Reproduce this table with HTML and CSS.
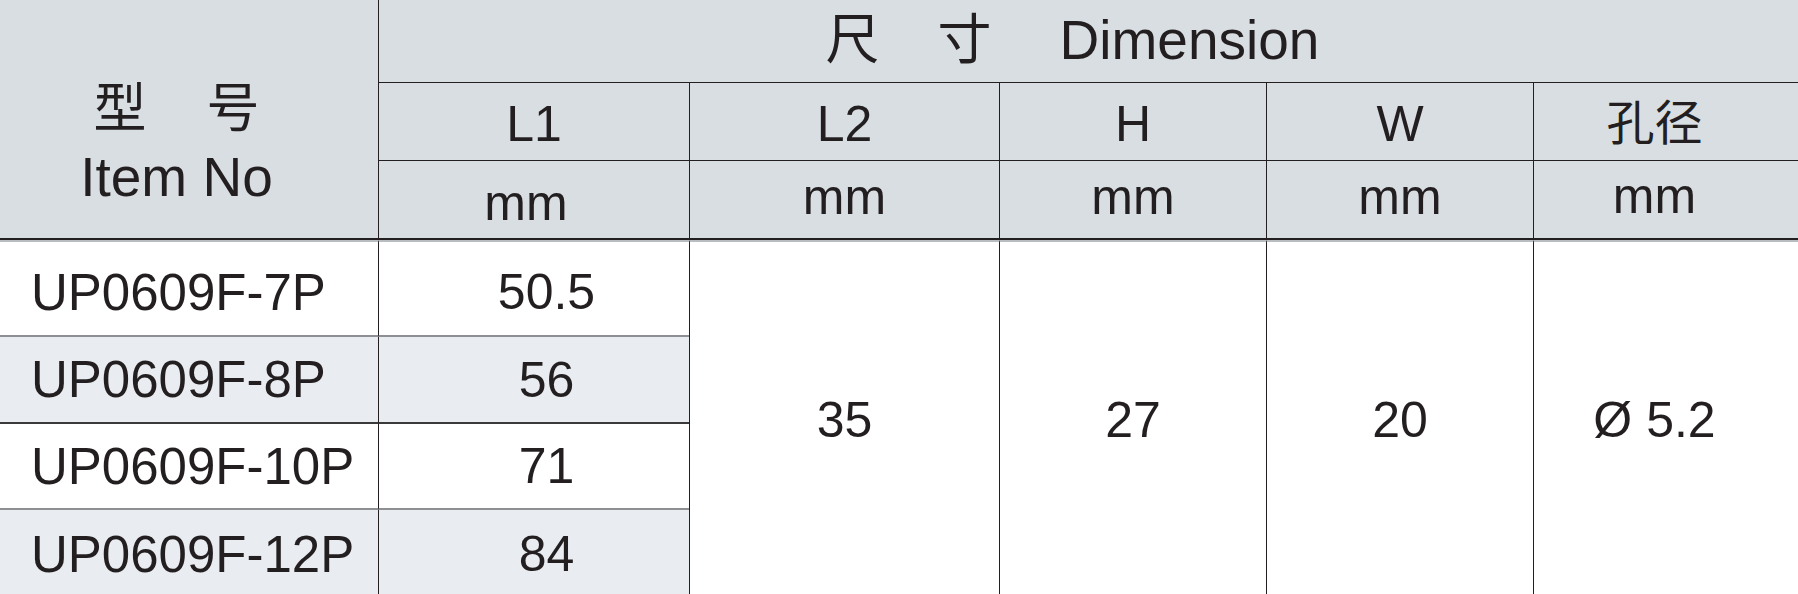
FILE: index.html
```html
<!DOCTYPE html>
<html lang="zh">
<head>
<meta charset="utf-8">
<title>UP0609F Dimension</title>
<link rel="stylesheet" href="styles.css">
</head>
<body>
<div class="spec">
  <div class="cell head item-head">
    <div class="cn-pair"><span>型</span><span>号</span></div>
    <div class="en-title">Item No</div>
  </div>
  <div class="cell head dim-head">
    <span class="cn-char">尺</span><span class="cn-char second">寸</span><span class="en-title dim-word">Dimension</span>
  </div>

  <div class="cell head sub">L1</div>
  <div class="cell head sub">L2</div>
  <div class="cell head sub">H</div>
  <div class="cell head sub">W</div>
  <div class="cell head sub hole">孔径</div>

  <div class="cell head unit unit-l1">mm</div>
  <div class="cell head unit">mm</div>
  <div class="cell head unit">mm</div>
  <div class="cell head unit">mm</div>
  <div class="cell head unit unit-hole">mm</div>

  <div class="cell merged col-l2">35</div>
  <div class="cell merged col-h">27</div>
  <div class="cell merged col-w">20</div>
  <div class="cell merged col-hole">Ø 5.2</div>

  <div class="cell model first r-light">UP0609F-7P</div>
  <div class="cell l1v first r-light">50.5</div>

  <div class="cell model shade r-dark">UP0609F-8P</div>
  <div class="cell l1v shade r-dark">56</div>

  <div class="cell model r-light">UP0609F-10P</div>
  <div class="cell l1v r-light">71</div>

  <div class="cell model shade">UP0609F-12P</div>
  <div class="cell l1v shade">84</div>
</div>
</body>
</html>
```

FILE: styles.css
```css
html, body {
  margin: 0;
  padding: 0;
  background: #ffffff;
  overflow: hidden;
}

body {
  width: 1798px;
  height: 594px;
  font-family: "Liberation Sans", "Noto Sans CJK SC", sans-serif;
  color: #231f20;
}

.spec {
  display: grid;
  grid-template-columns: 378px 311px 310px 267px 267px 265px;
  grid-template-rows: 83px 78px 79px 97px 87px 86px 88px;
}

.cell {
  box-sizing: border-box;
  display: flex;
  align-items: center;
  justify-content: center;
  font-size: 50px;
  line-height: 1;
  white-space: nowrap;
  border-left: 1px solid #231f20;
  background: #ffffff;
}

.head {
  background: #d9dee3;
}

/* first header cell: 型号 / Item No */
.item-head {
  grid-column: 1;
  grid-row: 1 / 4;
  border-left: none;
  border-bottom: 2px solid #231f20;
  flex-direction: column;
  justify-content: flex-start;
  padding-top: 75px;
  padding-right: 25px;
}

.cn-pair {
  display: flex;
  gap: 60px;
  font-size: 53px;
  line-height: 68px;
}

.en-title {
  font-size: 55px;
  line-height: 68px;
}

/* 尺 寸 Dimension */
.dim-head {
  grid-column: 2 / 7;
  grid-row: 1;
  border-bottom: 1px solid #231f20;
  align-items: baseline;
  padding-top: 13px;
  padding-right: 32px;
}

.cn-char {
  font-size: 54px;
}

.cn-char.second {
  margin-left: 58px;
}

.dim-word {
  margin-left: 68px;
  line-height: 1;
}

/* second header row */
.sub {
  border-bottom: 1px solid #231f20;
  padding-top: 5px;
}

.sub.hole {
  font-size: 48px;
  padding-right: 23px;
}

/* unit row */
.unit {
  border-bottom: 2px solid #231f20;
  padding-bottom: 5px;
}

.unit-l1 {
  padding-bottom: 0;
  padding-top: 6px;
  padding-right: 16px;
}

.unit-hole {
  padding-bottom: 8px;
  padding-right: 23px;
}

/* body */
.merged {
  grid-row: 4 / 8;
  border-top: 2px solid #b9bcc0;
}

.col-l2 { grid-column: 3; }
.col-h { grid-column: 4; }
.col-w { grid-column: 5; }
.col-hole {
  grid-column: 6;
  padding-right: 23px;
}

.model {
  grid-column: 1;
  border-left: none;
  justify-content: flex-start;
  padding-left: 31px;
  font-size: 51px;
}

.l1v {
  grid-column: 2;
  padding-left: 25px;
}

.first {
  border-top: 2px solid #b9bcc0;
  padding-top: 7px;
}

.shade {
  background: #e9edf1;
}

.r-light {
  border-bottom: 2px solid #8d8f92;
}

.r-dark {
  border-bottom: 2px solid #3a3a3a;
}
```
